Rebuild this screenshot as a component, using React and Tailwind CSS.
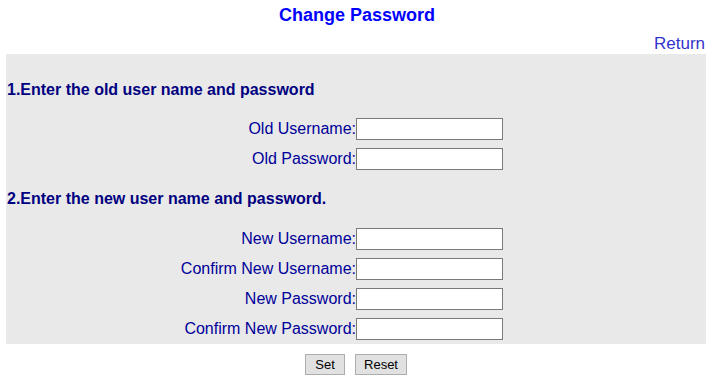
export default function App() {
  const Row = ({ label }) => (
    <div className="flex h-[30px] items-center">
      <div className="w-[350px] text-right text-[16px] leading-[20px] text-[#000099]">{label}</div>
      <input className="h-[22px] w-[147px] border border-[#7a7a7a] bg-white outline-none" />
    </div>
  );
  return (
    <div className="w-[714px] bg-white font-['Liberation_Sans',Arial,sans-serif]">
      <h1 className="h-[30px] text-center text-[18px] font-bold leading-[30px] text-[#0000ff]">Change Password</h1>
      <div className="flex h-[24px] justify-end pr-[9px] pt-[4px]">
        <a className="text-[17px] leading-[20px] text-[#3333cc]">Return</a>
      </div>
      <div className="ml-[6px] w-[700px] bg-[#e9e9e9] pt-[26px]">
        <div className="mb-[14px] pl-[1px] text-[16px] font-bold leading-[20px] text-[#000080]">1.Enter the old user name and password</div>
        <Row label="Old Username:" />
        <Row label="Old Password:" />
        <div className="mb-[15px] mt-[15px] pl-[1px] text-[16px] font-bold leading-[20px] text-[#000080]">2.Enter the new user name and password.</div>
        <Row label="New Username:" />
        <Row label="Confirm New Username:" />
        <Row label="New Password:" />
        <Row label="Confirm New Password:" />
      </div>
      <div className="mt-[10px] flex justify-center gap-[10px] pr-[2px]">
        <button className="h-[21px] w-[40px] border border-[#adadad] bg-[#e1e1e1] text-[13px] leading-[19px] text-black">Set</button>
        <button className="h-[21px] w-[52px] border border-[#adadad] bg-[#e1e1e1] text-[13px] leading-[19px] text-black">Reset</button>
      </div>
    </div>
  );
}
